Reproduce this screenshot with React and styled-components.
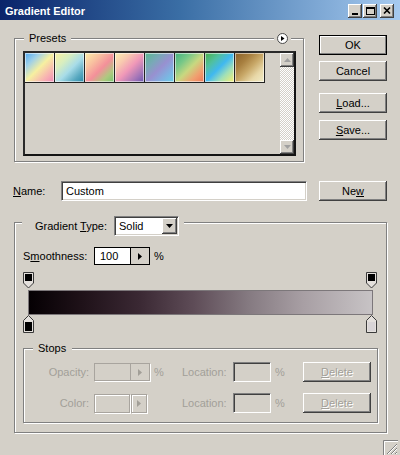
import React from 'react';
import styled, { createGlobalStyle, css } from 'styled-components';

const FACE = '#d4d0c8';
const SHADOW = '#808080';
const DARK = '#404040';
const DISABLED = '#a29f98';

const GlobalStyle = createGlobalStyle`
  html, body { margin: 0; padding: 0; background: ${FACE}; }
  body { font-family: "Liberation Sans", Arial, sans-serif; font-size: 11px; color: #000; }
  * { box-sizing: border-box; }
`;

const raised = css`
  background: ${FACE};
  box-shadow: inset -1px -1px ${DARK}, inset 1px 1px #fff, inset -2px -2px ${SHADOW}, inset 2px 2px ${FACE};
`;
const sunken = css`
  border: 1px solid;
  border-color: ${SHADOW} #fff #fff ${SHADOW};
  box-shadow: inset 1px 1px ${DARK}, inset -1px -1px ${FACE};
`;
const etched = css`
  border: 1px solid ${SHADOW};
  box-shadow: inset 1px 1px #fff, 1px 1px #fff;
`;

const Window = styled.div`
  width: 400px;
  height: 455px;
  background: ${FACE};
  display: flex;
  flex-direction: column;
  overflow: hidden;
  font: 11px "Liberation Sans", Arial, sans-serif;
  color: #000;
`;

const TitleBar = styled.div`
  height: 20px;
  flex: none;
  display: flex;
  align-items: center;
  padding: 2px 6px 0 5px;
  background: linear-gradient(90deg, #0a246a 0%, #3a6ea5 45%, #a6caf0 100%);
`;

const Title = styled.div`
  flex: 1;
  color: #fff;
  font-weight: bold;
  font-size: 11px;
`;

const CaptionButton = styled.div`
  width: 14px;
  height: 14px;
  margin-left: ${p => p.$gap || 0}px;
  display: flex;
  align-items: center;
  justify-content: center;
  ${raised};
`;

const Body = styled.div`
  display: flex;
  flex-direction: column;
  padding: 0 13px 0 14px;
`;

const TopGrid = styled.div`
  display: grid;
  grid-template-columns: 290px 68px;
  column-gap: 15px;
  row-gap: 19px;
`;

const ButtonColumn = styled.div`
  display: flex;
  flex-direction: column;
`;

const Button = styled.div`
  width: 68px;
  height: 20px;
  margin-top: ${p => p.$mt || 0}px;
  display: flex;
  align-items: center;
  justify-content: center;
  color: ${p => (p.$disabled ? DISABLED : '#000')};
  text-shadow: ${p => (p.$disabled ? '1px 1px #fff' : 'none')};
  ${raised};
  ${p =>
    p.$default &&
    css`
      border: 1px solid #000;
      box-shadow: inset -1px -1px ${SHADOW}, inset 1px 1px #fff;
    `}
`;

const Group = styled.div`
  position: relative;
  display: flex;
  flex-direction: column;
  ${etched};
`;

const PresetsGroup = styled(Group)`
  margin-top: 18px;
  height: 124px;
  padding: 12px 7px 5px 8px;
`;

const GradientGroup = styled(Group)`
  margin-top: 21px;
  padding: 24px 8px 9px 8px;
`;

const StopsGroup = styled(Group)`
  margin-top: 15px;
  padding: 13px 0 9px 0;
  gap: 11px;
`;

const Legend = styled.div`
  position: absolute;
  top: -7px;
  left: ${p => p.$left}px;
  padding: ${p => p.$pad};
  background: ${FACE};
  line-height: 13px;
  display: flex;
  align-items: center;
  gap: 7px;
`;

const MenuButton = styled.div`
  position: absolute;
  top: -6px;
  right: 12px;
  padding: 0 3px;
  background: ${FACE};
  display: flex;
`;

const PresetsList = styled.div`
  flex: 1;
  display: flex;
  border: 2px solid #1e1e1e;
  border-color: #2a2a2a #141414 #141414 #2a2a2a;
  background: ${FACE};
`;

const SwatchArea = styled.div`
  flex: 1;
  display: flex;
  flex-wrap: wrap;
  align-content: flex-start;
`;

const Swatch = styled.div`
  width: 30px;
  height: 30px;
  border-right: 1px solid #222;
  border-bottom: 1px solid #222;
  background: ${p => p.$bg};
  box-shadow: inset 0 0 0 1px rgba(255, 255, 255, 0.55);
`;

const ScrollBar = styled.div`
  width: 14px;
  display: flex;
  flex-direction: column;
  justify-content: space-between;
  background: repeating-conic-gradient(#fff 0 25%, ${FACE} 0 50%) 0 0 / 2px 2px;
`;

const ScrollButton = styled.div`
  height: 14px;
  display: flex;
  align-items: center;
  justify-content: center;
  ${raised};
`;

const NameRow = styled.div`
  display: flex;
  align-items: center;
  margin: 0 -3px 0 -1px;
  height: 20px;
`;

const NameLabel = styled.span`
  width: 48px;
`;

const TextField = styled.div`
  flex: 1;
  height: 20px;
  background: #fff;
  padding-left: 4px;
  display: flex;
  align-items: center;
  ${sunken};
`;

const Select = styled.div`
  width: 65px;
  height: 20px;
  display: flex;
  align-items: center;
  background: #fff;
  ${sunken};
  padding: 1px;
`;

const SelectValue = styled.span`
  flex: 1;
  padding-left: 3px;
`;

const SelectButton = styled.div`
  width: 15px;
  height: 16px;
  display: flex;
  align-items: center;
  justify-content: center;
  ${raised};
`;

const SmoothRow = styled.div`
  display: flex;
  align-items: center;
  height: 18px;
`;

const SmoothLabel = styled.span`
  width: 71px;
`;

const Combo = styled.div`
  width: 56px;
  height: 18px;
  display: flex;
  border: 1px solid ${p => (p.$disabled ? '#a8a49e' : '#000')};
  box-shadow: ${p => (p.$disabled ? '1px 1px #fff' : 'none')};
`;

const ComboField = styled.div`
  flex: 1;
  display: flex;
  align-items: center;
  padding-left: 5px;
  background: ${p => (p.$disabled ? FACE : '#fff')};
  border-right: 1px solid ${p => (p.$disabled ? '#a8a49e' : '#000')};
`;

const ComboArrow = styled.div`
  width: 18px;
  display: flex;
  align-items: center;
  justify-content: center;
  background: ${FACE};
`;

const Pct = styled.span`
  padding-left: 4px;
  color: ${p => (p.$disabled ? DISABLED : '#000')};
`;

const GradientArea = styled.div`
  margin-top: 7px;
  display: flex;
  flex-direction: column;
`;

const StopTrack = styled.div`
  position: relative;
  height: ${p => p.$h}px;
  margin: 0 7px 0 5px;
`;

const StopMarker = styled.div`
  position: absolute;
  top: 0;
  margin-left: -5px;
  display: flex;
`;

const GradientBar = styled.div`
  height: 25px;
  margin: 1px 5px 0 5px;
  border: 1px solid #7c777a;
  background: linear-gradient(90deg, #050003 0%, #1e1118 15%, #3a2833 32%, #5e4c57 48%, #857a81 64%, #a89fa4 80%, #c7c3c5 100%);
`;

const StopRow = styled.div`
  display: grid;
  grid-template-columns: 70px 56px 32px 51px 38px 32px 68px;
  height: 20px;
  align-items: center;
`;

const RowLabel = styled.span`
  text-align: right;
  padding-right: 5px;
  color: ${DISABLED};
`;

const LocLabel = styled.span`
  color: ${DISABLED};
`;

const LocationBox = styled.div`
  width: 38px;
  height: 20px;
  background: ${FACE};
  ${sunken};
`;

const ColorCombo = styled.div`
  display: flex;
  gap: 1px;
  height: 19px;
`;

const ColorField = styled.div`
  width: 36px;
  border: 1px solid #a8a49e;
  box-shadow: inset 1px 1px #fff, 1px 1px #fff;
`;

const ColorArrow = styled.div`
  width: 16px;
  display: flex;
  align-items: center;
  justify-content: center;
  border: 1px solid #a8a49e;
  box-shadow: inset 1px 1px #fff, 1px 1px #fff;
`;

const Footer = styled.div`
  margin-top: auto;
  display: flex;
  justify-content: flex-end;
  padding-right: 2px;
  height: 15px;
`;

const swatches = [
  'linear-gradient(135deg, #4fa8f0 0%, #9fd0e8 25%, #f6f0a0 50%, #f8b8b0 75%, #f08ab8 100%)',
  'linear-gradient(135deg, #fbf2a0 0%, #d8eec0 30%, #a8dce8 55%, #58a8c0 80%, #2a8aa8 100%)',
  'linear-gradient(135deg, #fcefa8 0%, #f8c0a0 30%, #f4909a 55%, #b0c880 78%, #78c870 100%)',
  'linear-gradient(135deg, #fcf0b0 0%, #f8c8b0 28%, #f098b8 52%, #a878b8 78%, #6a58b0 100%)',
  'linear-gradient(135deg, #58b890 0%, #7aa8b8 30%, #9890d0 52%, #80b0e0 75%, #68d0e8 100%)',
  'linear-gradient(135deg, #40b080 0%, #78c888 28%, #c8d880 52%, #f0a070 76%, #f07858 100%)',
  'linear-gradient(135deg, #48b048 0%, #50c0a0 28%, #40b8f0 50%, #a0e0b8 72%, #f8f070 100%)',
  'linear-gradient(135deg, #8a6028 0%, #a88040 30%, #c8a868 52%, #e8d8a8 75%, #f0ecc8 100%)',
];

const TriRight = ({ color = '#000' }) => (
  <svg width="4" height="7" viewBox="0 0 4 7">
    <path d="M0 0L4 3.5L0 7z" fill={color} />
  </svg>
);

const TriDown = ({ color = '#000' }) => (
  <svg width="7" height="4" viewBox="0 0 7 4">
    <path d="M0 0H7L3.5 4z" fill={color} />
  </svg>
);

const TriUp = ({ color = '#000' }) => (
  <svg width="7" height="4" viewBox="0 0 7 4">
    <path d="M0 4H7L3.5 0z" fill={color} />
  </svg>
);

const TopStop = ({ fill }) => (
  <svg width="11" height="17" viewBox="0 0 11 17">
    <path d="M0.5 0.5H10.5V11L5.5 16L0.5 11Z" fill="#e4e0dc" stroke="#3a3a3a" />
    <rect x="2" y="2" width="7" height="7" fill={fill} />
  </svg>
);

const BottomStop = ({ fill }) => (
  <svg width="11" height="18" viewBox="0 0 11 18">
    <path d="M5.5 0.5L10.5 5.5V17.5H0.5V5.5Z" fill="#e4e0dc" stroke="#3a3a3a" />
    <rect x="2" y="7" width="7" height="9" fill={fill} />
  </svg>
);

const opacityStops = [
  { loc: 0, fill: '#000' },
  { loc: 100, fill: '#000' },
];
const colorStops = [
  { loc: 0, fill: '#000' },
  { loc: 100, fill: '#d8d4d6' },
];

export default function App() {
  return (
    <>
      <GlobalStyle />
      <Window>
        <TitleBar>
          <Title>Gradient Editor</Title>
          <CaptionButton>
            <svg width="14" height="14" viewBox="0 0 14 14">
              <rect x="4" y="9" width="6" height="2" fill="#000" />
            </svg>
          </CaptionButton>
          <CaptionButton $gap={1}>
            <svg width="14" height="14" viewBox="0 0 14 14">
              <rect x="3.5" y="3.5" width="8" height="7" fill="none" stroke="#000" />
              <rect x="3" y="3" width="9" height="2" fill="#000" />
            </svg>
          </CaptionButton>
          <CaptionButton $gap={3}>
            <svg width="14" height="14" viewBox="0 0 14 14">
              <path d="M4 3.5L10 9.5M10 3.5L4 9.5" stroke="#000" strokeWidth="1.7" />
            </svg>
          </CaptionButton>
        </TitleBar>

        <Body>
          <TopGrid>
            <PresetsGroup>
              <Legend $left={9} $pad="0 5px">Presets</Legend>
              <MenuButton>
                <svg width="11" height="11" viewBox="0 0 11 11">
                  <circle cx="5.5" cy="5.5" r="5" fill="#fff" stroke="#4a4a4a" />
                  <path d="M4 3L7.5 5.5L4 8Z" fill="#000" />
                </svg>
              </MenuButton>
              <PresetsList>
                <SwatchArea>
                  {swatches.map((bg, i) => (
                    <Swatch key={i} $bg={bg} />
                  ))}
                </SwatchArea>
                <ScrollBar>
                  <ScrollButton>
                    <TriUp color="#a0a0a0" />
                  </ScrollButton>
                  <ScrollButton>
                    <TriDown color="#a0a0a0" />
                  </ScrollButton>
                </ScrollBar>
              </PresetsList>
            </PresetsGroup>

            <ButtonColumn>
              <Button $default $mt={15}>OK</Button>
              <Button $mt={6}>Cancel</Button>
              <Button $mt={12}>
                <span><u>L</u>oad...</span>
              </Button>
              <Button $mt={7}>
                <span><u>S</u>ave...</span>
              </Button>
            </ButtonColumn>

            <NameRow>
              <NameLabel>
                <u>N</u>ame:
              </NameLabel>
              <TextField>Custom</TextField>
            </NameRow>
            <Button>
              <span>Ne<u>w</u></span>
            </Button>
          </TopGrid>

          <GradientGroup>
            <Legend $left={7} $pad="0 5px 0 13px">
              <span>
                Gradient <u>T</u>ype:
              </span>
              <Select>
                <SelectValue>Solid</SelectValue>
                <SelectButton>
                  <TriDown />
                </SelectButton>
              </Select>
            </Legend>

            <SmoothRow>
              <SmoothLabel>
                S<u>m</u>oothness:
              </SmoothLabel>
              <Combo>
                <ComboField>100</ComboField>
                <ComboArrow>
                  <TriRight />
                </ComboArrow>
              </Combo>
              <Pct>%</Pct>
            </SmoothRow>

            <GradientArea>
              <StopTrack $h={17}>
                {opacityStops.map((s, i) => (
                  <StopMarker key={i} style={{ left: `${s.loc}%` }}>
                    <TopStop fill={s.fill} />
                  </StopMarker>
                ))}
              </StopTrack>
              <GradientBar />
              <StopTrack $h={18}>
                {colorStops.map((s, i) => (
                  <StopMarker key={i} style={{ left: `${s.loc}%` }}>
                    <BottomStop fill={s.fill} />
                  </StopMarker>
                ))}
              </StopTrack>
            </GradientArea>

            <StopsGroup>
              <Legend $left={9} $pad="0 6px 0 5px">Stops</Legend>
              <StopRow>
                <RowLabel>Opacity:</RowLabel>
                <Combo $disabled>
                  <ComboField $disabled />
                  <ComboArrow>
                    <TriRight color="#a29f98" />
                  </ComboArrow>
                </Combo>
                <Pct $disabled>%</Pct>
                <LocLabel>Location:</LocLabel>
                <LocationBox />
                <Pct $disabled>%</Pct>
                <Button $disabled>
                  <span><u>D</u>elete</span>
                </Button>
              </StopRow>
              <StopRow>
                <RowLabel>Color:</RowLabel>
                <ColorCombo>
                  <ColorField />
                  <ColorArrow>
                    <TriRight color="#a29f98" />
                  </ColorArrow>
                </ColorCombo>
                <span />
                <LocLabel>Location:</LocLabel>
                <LocationBox />
                <Pct $disabled>%</Pct>
                <Button $disabled>
                  <span><u>D</u>elete</span>
                </Button>
              </StopRow>
            </StopsGroup>
          </GradientGroup>
        </Body>

        <Footer>
          <svg width="15" height="15" viewBox="0 0 15 15">
            <path d="M0.5 15V0.5H15" stroke="#808080" fill="none" />
            <path d="M1.5 15V1.5H15" stroke="#fff" fill="none" />
            <path d="M14 4L4 14M14 8L8 14M14 12L12 14" stroke="#808080" />
            <path d="M14 5L5 14M14 9L9 14M14 13L13 14" stroke="#fff" />
          </svg>
        </Footer>
      </Window>
    </>
  );
}
